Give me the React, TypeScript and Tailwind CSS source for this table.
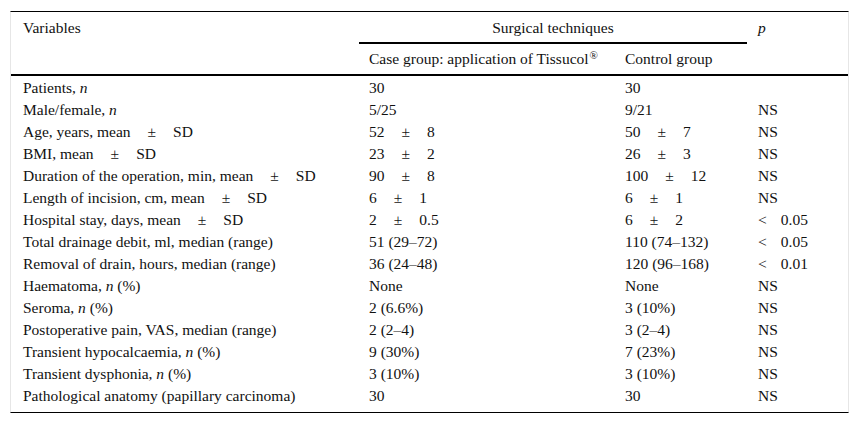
import React from 'react';

type Row = [React.ReactNode, React.ReactNode, React.ReactNode, React.ReactNode];

const N = () => <i>n</i>;

// value ± value with the wide spacing of the source table
const Pm = ({ a, b }: { a: React.ReactNode; b: React.ReactNode }) => (
  <span>
    {a}
    <span className="mx-[17px]">±</span>
    {b}
  </span>
);

const Lt = ({ v }: { v: string }) => (
  <span>
    <span className="mr-[14px]">&lt;</span>
    {v}
  </span>
);

const Sd = () => <span className="mx-[17px]">±</span>;

const rows: Row[] = [
  [<>Patients, <N /></>, '30', '30', ''],
  [<>Male/female, <N /></>, '5/25', '9/21', 'NS'],
  [<>Age, years, mean<Sd />SD</>, <Pm a="52" b="8" />, <Pm a="50" b="7" />, 'NS'],
  [<>BMI, mean<Sd />SD</>, <Pm a="23" b="2" />, <Pm a="26" b="3" />, 'NS'],
  [<>Duration of the operation, min, mean<Sd />SD</>, <Pm a="90" b="8" />, <Pm a="100" b="12" />, 'NS'],
  [<>Length of incision, cm, mean<Sd />SD</>, <Pm a="6" b="1" />, <Pm a="6" b="1" />, 'NS'],
  [<>Hospital stay, days, mean<Sd />SD</>, <Pm a="2" b="0.5" />, <Pm a="6" b="2" />, <Lt v="0.05" />],
  ['Total drainage debit, ml, median (range)', '51 (29–72)', '110 (74–132)', <Lt v="0.05" />],
  ['Removal of drain, hours, median (range)', '36 (24–48)', '120 (96–168)', <Lt v="0.01" />],
  [<>Haematoma, <N /> (%)</>, 'None', 'None', 'NS'],
  [<>Seroma, <N /> (%)</>, '2 (6.6%)', '3 (10%)', 'NS'],
  ['Postoperative pain, VAS, median (range)', '2 (2–4)', '3 (2–4)', 'NS'],
  [<>Transient hypocalcaemia, <N /> (%)</>, '9 (30%)', '7 (23%)', 'NS'],
  [<>Transient dysphonia, <N /> (%)</>, '3 (10%)', '3 (10%)', 'NS'],
  ['Pathological anatomy (papillary carcinoma)', '30', '30', 'NS'],
];

export default function App() {
  return (
    <div className="w-[859px] h-[423px] bg-white pt-[11px] pl-[10px] text-[#111] text-[15.5px] leading-[17px] font-['Liberation_Serif','Times_New_Roman',serif]">
      <div className="w-[839px] border-t border-t-black border-b border-b-black border-x border-x-[#e6e6e6] pb-[6px]">
        {/* Header */}
        <div className="grid grid-cols-[348px_256px_132px_1fr] border-b-2 border-black">
          <div className="row-span-2 pl-[12px] pt-[7px]">Variables</div>
          <div className="col-span-2 h-[32px] pt-[7px] text-center border-b-2 border-black">Surgical techniques</div>
          <div className="row-span-2 pl-[11px] pt-[7px]"><i>p</i></div>
          <div className="h-[30px] pl-[10px] pt-[6px]">
            Case group: application of Tissucol<sup className="text-[11px] ml-[1px]">®</sup>
          </div>
          <div className="h-[30px] pl-[10px] pt-[6px]">Control group</div>
        </div>

        {/* Body */}
        {rows.map((r, i) => (
          <div key={i} className="grid grid-cols-[348px_256px_132px_1fr] h-[22px] items-center">
            <div className="pl-[12px] whitespace-nowrap">{r[0]}</div>
            <div className="pl-[10px] whitespace-nowrap">{r[1]}</div>
            <div className="pl-[10px] whitespace-nowrap">{r[2]}</div>
            <div className="pl-[11px] whitespace-nowrap">{r[3]}</div>
          </div>
        ))}
      </div>
    </div>
  );
}
